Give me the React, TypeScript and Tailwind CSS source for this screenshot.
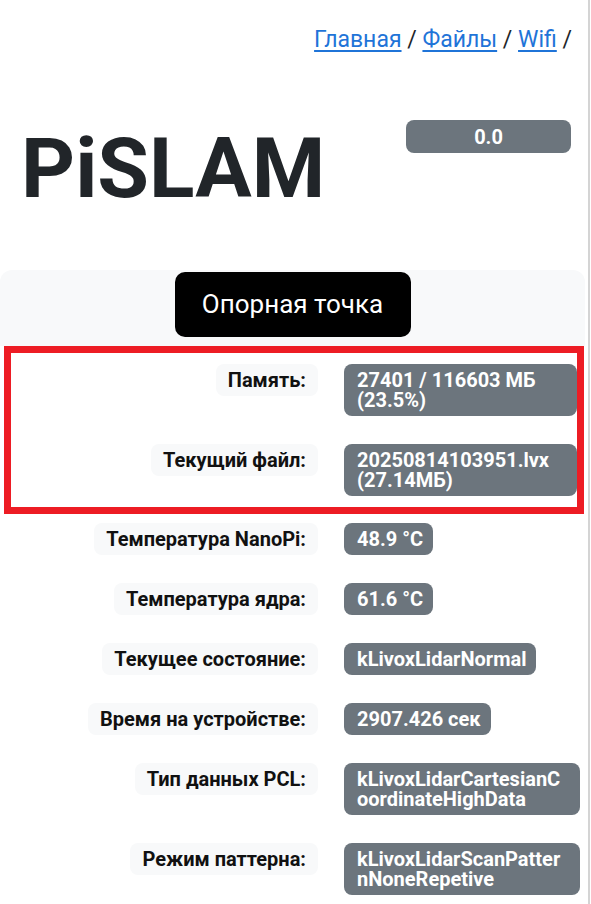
import React from "react";

const font = { fontFamily: "Roboto, 'Noto Sans', sans-serif" };

function Row({ label, value, labelWidth }: { label: string; value: string; labelWidth: string }) {
  return (
    <div className="flex items-start">
      <div className={`${labelWidth} flex justify-end shrink-0`}>
        <span className="bg-[#f8f9fa] rounded-[8px] px-[12px] py-[6px] text-[20px] leading-[20px] font-bold text-[#111]">
          {label}
        </span>
      </div>
      <div className="ml-[26px]">
        <div className="inline-block max-w-[236px] bg-[#6c757d] text-white rounded-[8px] pl-[13px] pr-[10px] py-[6px] text-[20px] leading-[20px] font-bold [overflow-wrap:anywhere]">
          {value}
        </div>
      </div>
    </div>
  );
}

export default function App() {
  return (
    <div className="w-[591px] min-h-[904px] flex bg-white" style={font}>
      <div className="w-[588px] flex flex-col">
        <div className="pt-[23px] pr-[16px] text-right text-[23px] leading-[34px] text-[#212529]">
          <a className="text-[#1f74d8] underline underline-offset-[3px]" href="#">Главная</a>
          {" / "}
          <a className="text-[#1f74d8] underline underline-offset-[3px]" href="#">Файлы</a>
          {" / "}
          <a className="text-[#1f74d8] underline underline-offset-[3px]" href="#">Wifi</a>
          {" /"}
        </div>

        <div className="mt-[63px] flex justify-between items-start">
          <h1 className="ml-[21px] mt-[7px] text-[84px] leading-none font-bold text-[#212529]">PiSLAM</h1>
          <div className="mr-[17px] w-[165px] h-[33px] rounded-[8px] bg-[#6c757d] text-white text-[20px] font-bold flex items-center justify-center">
            0.0
          </div>
        </div>

        <div className="mt-[59px] h-[76px] bg-[#f8f9fa] rounded-t-[12px] mr-[3px] flex justify-center pt-[2px]">
          <div className="w-[236px] h-[65px] rounded-[10px] bg-black text-white text-[26px] flex items-center justify-center">
            Опорная точка
          </div>
        </div>

        <div className="mx-[4px] border-[7px] border-[#ed1c24] pt-[11px] pb-[11px] flex flex-col gap-[28px]">
          <Row labelWidth="w-[307px]" label="Память:" value="27401 / 116603 МБ (23.5%)" />
          <Row labelWidth="w-[307px]" label="Текущий файл:" value="20250814103951.lvx (27.14МБ)" />
        </div>

        <div className="mt-[9px] flex flex-col gap-[28px]">
          <Row labelWidth="w-[318px]" label="Температура NanoPi:" value="48.9 °C" />
          <Row labelWidth="w-[318px]" label="Температура ядра:" value="61.6 °C" />
          <Row labelWidth="w-[318px]" label="Текущее состояние:" value="kLivoxLidarNormal" />
          <Row labelWidth="w-[318px]" label="Время на устройстве:" value="2907.426 сек" />
          <Row labelWidth="w-[318px]" label="Тип данных PCL:" value="kLivoxLidarCartesianCoordinateHighData" />
          <Row labelWidth="w-[318px]" label="Режим паттерна:" value="kLivoxLidarScanPatternNoneRepetive" />
        </div>
      </div>
      <div className="w-[2px] bg-[#d4d4d4]" />
      <div className="w-[1px]" />
    </div>
  );
}
